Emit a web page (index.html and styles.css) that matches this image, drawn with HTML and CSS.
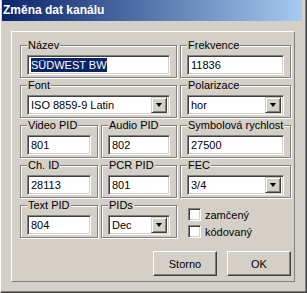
FILE: index.html
```html
<!DOCTYPE html>
<html lang="cs">
<head>
  <meta charset="UTF-8">
  <title>Změna dat kanálu</title>
  <link rel="stylesheet" href="styles.css">
</head>
<body>
  <div class="window">
    <div class="titlebar">Změna dat kanálu</div>
    <div class="panel">
      <div class="grid">
        <fieldset class="group wide">
          <legend>Název</legend>
          <div class="edit"><span class="sel">SÜDWEST BW</span></div>
        </fieldset>
        <fieldset class="group">
          <legend>Frekvence</legend>
          <div class="edit">11836</div>
        </fieldset>

        <fieldset class="group wide">
          <legend>Font</legend>
          <div class="combo"><span class="value">ISO 8859-9 Latin</span><span class="drop"></span></div>
        </fieldset>
        <fieldset class="group">
          <legend>Polarizace</legend>
          <div class="combo"><span class="value">hor</span><span class="drop"></span></div>
        </fieldset>

        <fieldset class="group">
          <legend>Video PID</legend>
          <div class="edit">801</div>
        </fieldset>
        <fieldset class="group">
          <legend>Audio PID</legend>
          <div class="edit">802</div>
        </fieldset>
        <fieldset class="group">
          <legend>Symbolová rychlost</legend>
          <div class="edit">27500</div>
        </fieldset>

        <fieldset class="group">
          <legend>Ch. ID</legend>
          <div class="edit">28113</div>
        </fieldset>
        <fieldset class="group">
          <legend>PCR PID</legend>
          <div class="edit">801</div>
        </fieldset>
        <fieldset class="group">
          <legend>FEC</legend>
          <div class="combo"><span class="value">3/4</span><span class="drop"></span></div>
        </fieldset>

        <fieldset class="group">
          <legend>Text PID</legend>
          <div class="edit">804</div>
        </fieldset>
        <fieldset class="group">
          <legend>PIDs</legend>
          <div class="combo"><span class="value">Dec</span><span class="drop"></span></div>
        </fieldset>
        <div class="checks">
          <label class="check"><span class="box"></span>zamčený</label>
          <label class="check"><span class="box"></span>kódovaný</label>
        </div>
      </div>

      <div class="buttons">
        <button>Storno</button>
        <button>OK</button>
      </div>
    </div>
  </div>
</body>
</html>
```

FILE: styles.css
```css
body {
  margin: 0;
  background-color: #d4d0c8;
  font-family: "Liberation Sans", Arial, sans-serif;
  font-size: 11px;
  color: #000;
}
.window {
  width: 307px;
  height: 293px;
  box-sizing: border-box;
  padding: 0 4px 0 2px;
  border-left: 1px solid #fff;
  border-right: 1px solid #404040;
  border-bottom: 1px solid #404040;
  box-shadow: inset -1px -1px 0 #808080;
  background-color: #d4d0c8;
}
.titlebar {
  height: 21px;
  line-height: 21px;
  padding-left: 1px;
  margin-left: -1px;
  color: #fff;
  font-weight: bold;
  font-size: 12px;
  background: linear-gradient(to right, #0a246a, #a6caf0);
}
.panel {
  margin: 10px 0 0 8px;
  width: 284px;
  height: 251px;
  box-sizing: border-box;
  padding: 7px 3px 5px 8px;
  border: 1px solid;
  border-color: #fff #808080 #808080 #fff;
}
.grid {
  display: grid;
  grid-template-columns: 78px 76px 111px;
  column-gap: 3px;
  row-gap: 1px;
}
.wide {
  grid-column: span 2;
}
.group {
  margin: 0;
  min-width: 0;
  padding: 3px 6px 2px;
  border: 1px solid #808080;
  box-shadow: inset 1px 1px 0 #fff, 1px 1px 0 #fff;
}
.group legend {
  padding: 0 1px;
  line-height: 13px;
  white-space: nowrap;
  background-color: #d4d0c8;
}
.edit,
.combo {
  height: 20px;
  box-sizing: border-box;
  border: 1px solid;
  border-color: #808080 #fff #fff #808080;
  box-shadow: inset 1px 1px 0 #404040, inset -1px -1px 0 #d4d0c8;
  background-color: #fff;
  line-height: 18px;
  padding-left: 3px;
  white-space: nowrap;
  overflow: hidden;
}
.sel {
  background-color: #0a246a;
  color: #fff;
  padding: 1px 0;
}
.combo {
  display: flex;
  align-items: center;
  padding-right: 2px;
}
.combo .value {
  flex: 1;
}
.drop {
  width: 16px;
  height: 16px;
  box-sizing: border-box;
  border: 1px solid;
  border-color: #d4d0c8 #404040 #404040 #d4d0c8;
  box-shadow: inset 1px 1px 0 #fff, inset -1px -1px 0 #808080;
  background-color: #d4d0c8;
  display: flex;
  align-items: center;
  justify-content: center;
}
.drop::after {
  content: "";
  border-left: 3.5px solid transparent;
  border-right: 3.5px solid transparent;
  border-top: 4px solid #000;
}
.checks {
  display: flex;
  flex-direction: column;
  gap: 4px;
  padding: 9px 0 0 8px;
}
.check {
  display: flex;
  align-items: center;
  gap: 4px;
  height: 13px;
}
.box {
  width: 13px;
  height: 13px;
  box-sizing: border-box;
  border: 1px solid;
  border-color: #808080 #fff #fff #808080;
  box-shadow: inset 1px 1px 0 #404040, inset -1px -1px 0 #d4d0c8;
  background-color: #fff;
}
.buttons {
  display: flex;
  justify-content: flex-end;
  gap: 10px;
  margin-top: 13px;
}
button {
  width: 64px;
  height: 25px;
  box-sizing: border-box;
  padding: 0;
  font-family: inherit;
  font-size: 11px;
  color: #000;
  background-color: #d4d0c8;
  border: 1px solid;
  border-color: #fff #404040 #404040 #fff;
  box-shadow: inset -1px -1px 0 #808080;
}
```
